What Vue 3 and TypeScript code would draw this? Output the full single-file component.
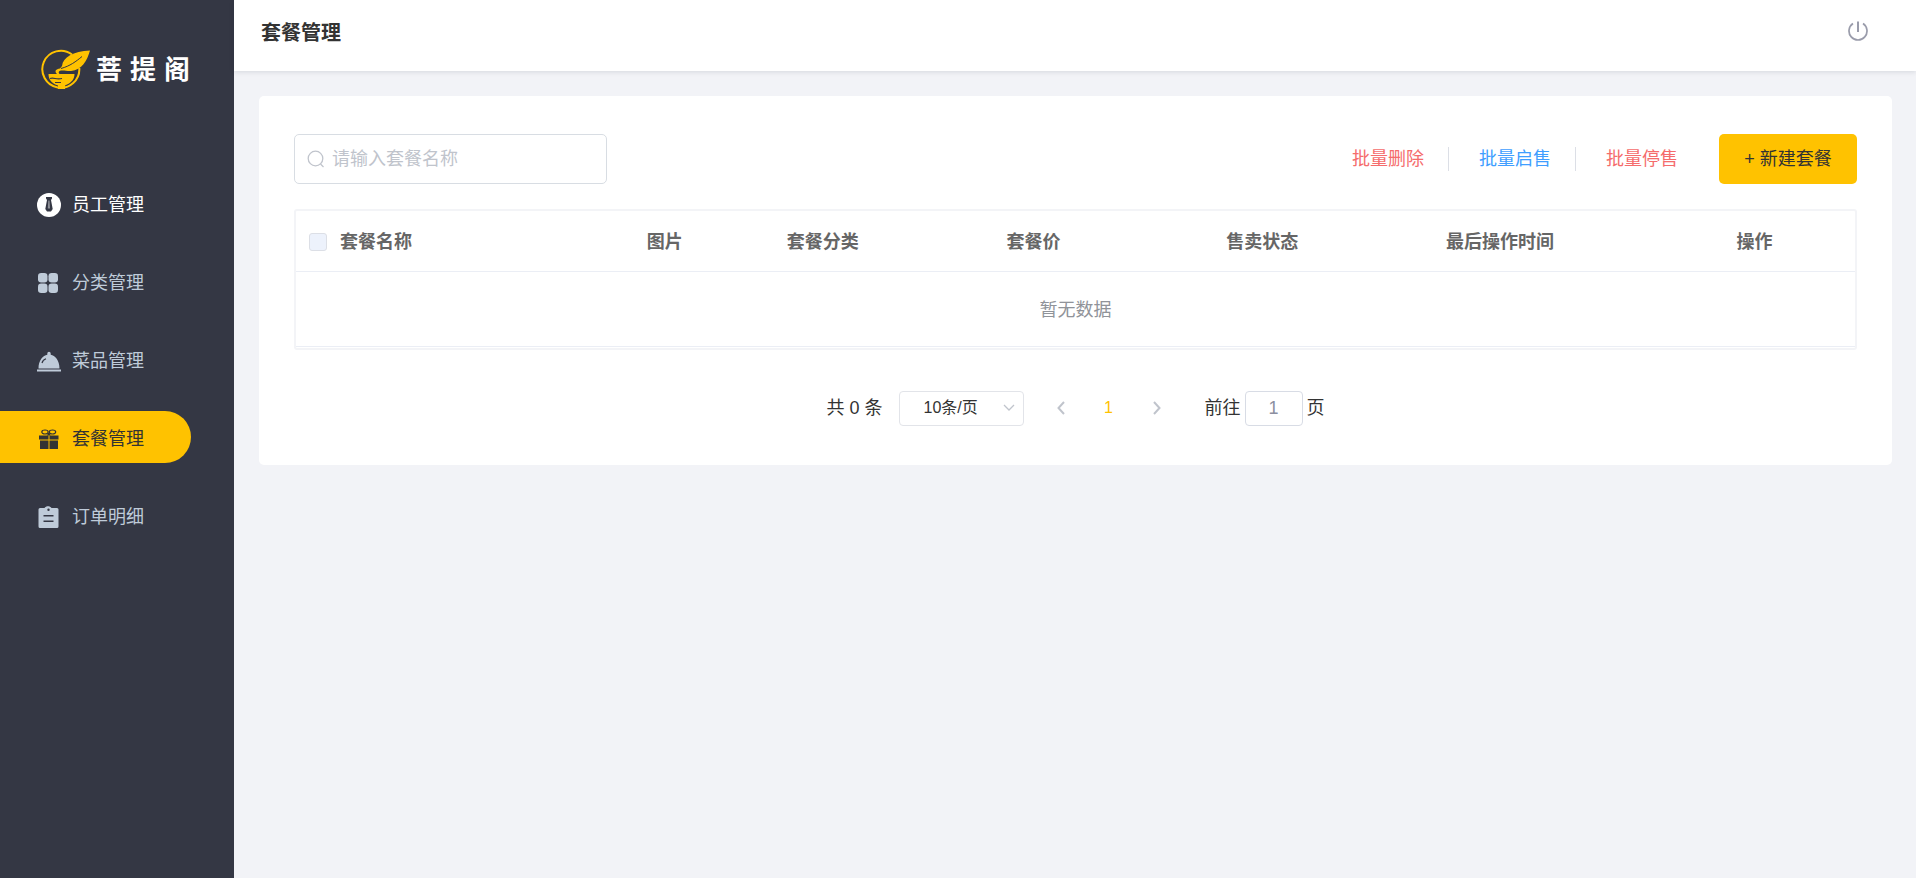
<script setup lang="ts">
import { ref } from 'vue'

interface MenuItem {
  id: string
  label: string
}

const brand: string[] = ['菩', '提', '阁']
const menu: MenuItem[] = [
  { id: 'member', label: '员工管理' },
  { id: 'category', label: '分类管理' },
  { id: 'food', label: '菜品管理' },
  { id: 'combo', label: '套餐管理' },
  { id: 'order', label: '订单明细' },
]
const active = ref('combo')
const hovered = ref('member')
const keyword = ref('')
const pageSize = ref('10')
const jumpPage = ref('1')
</script>

<template>
  <div class="app">
    <aside class="sidebar">
      <div class="logo">
        <svg class="logo-mark" viewBox="0 0 50 42" aria-hidden="true">
          <path d="M31 5.500A18.500 18.500 0 1 0 38.300 19" fill="none" stroke="#ffc200" stroke-width="2" />
          <path d="M21 17C22 8 32 2.500 49 1.500C46 12 41 21 30 22C26 22.300 23 21 20 21.500C17.500 22 17 23.500 18.500 25L16 25C13 22 15 20 19 19.500Z" fill="#ffc200" />
          <path d="M20 19.500C29 17 35 12.500 41 7.500" fill="none" stroke="#343744" stroke-width="1" />
          <path d="M7.500 25L33.500 25C33.500 30 30.500 33.500 26 35.500L24 36.500L24 40L17 40L17 36.500C11 34.500 7.500 31 7.500 25Z" fill="#ffc200" />
          <path d="M9 29.500C13 28 15 31 21 29.500M14 33.500L20 33.500" fill="none" stroke="#343744" stroke-width="1.100" />
        </svg>
        <span class="logo-text"><b v-for="char in brand" :key="char">{{ char }}</b></span>
      </div>
      <nav class="menu">
        <a
          v-for="item in menu"
          :key="item.id"
          href="#"
          class="menu-item"
          :class="{ active: item.id === active, hovered: item.id === hovered }"
          @click.prevent="active = item.id"
        >
          <svg class="menu-icon" viewBox="0 0 24 24" fill="currentColor" aria-hidden="true">
            <template v-if="item.id === 'member'">
              <circle cx="12" cy="12" r="12" />
              <path d="M9 4h6v1.500l-1 1.500 1.700 9L14 18.500h-4L8.300 16 10 7 9 5.500z" fill="#343744" />
              <path d="M11.300 7.500h1.200l.5 8h-2.200z" opacity=".45" />
            </template>
            <template v-else-if="item.id === 'category'">
              <rect x="1" y="2" width="9.500" height="9.500" rx="3.200" />
              <rect x="11.500" y="2" width="9.500" height="9.500" rx="3.200" />
              <rect x="1" y="12.500" width="9.500" height="9.500" rx="3.200" />
              <rect x="11.500" y="12.500" width="9.500" height="9.500" rx="3.200" />
            </template>
            <template v-else-if="item.id === 'food'">
              <path d="M1.500 19.500C1.500 11 6 6.500 10.300 5.700V4.500a1.700 1.700 0 0 1 3.400 0v1.200C18 6.500 22.500 11 22.500 19.500z" />
              <rect x="0" y="20.500" width="24" height="2" />
              <path d="M5 14C5.500 12 7 10.500 9 9.800" fill="none" stroke="#343744" stroke-width="1.200" />
            </template>
            <template v-else-if="item.id === 'combo'">
              <path d="M2 8.500h9.500v4H2zM12.500 8.500H21.500v4h-9zM3 13.500h8.500V22H3zM12.500 13.500H21V22h-8.500z" />
              <ellipse cx="8" cy="5" rx="3.200" ry="2" fill="none" stroke="currentColor" stroke-width="1.200" />
              <ellipse cx="15.500" cy="5" rx="3.200" ry="2" fill="none" stroke="currentColor" stroke-width="1.200" />
              <path d="M11 6h1.500l1 2.500h-3.500z" />
            </template>
            <path v-else fill-rule="evenodd" d="M3 3h4.500C9 .8 13 .8 14.500 3H20a1.500 1.500 0 0 1 1.500 1.500v17A1.500 1.500 0 0 1 20 23H3a1.500 1.500 0 0 1-1.500-1.500v-17A1.500 1.500 0 0 1 3 3zM11.500 3.500a1.200 1.200 0 1 0 0 2.400a1.200 1.200 0 1 0 0-2.400zM6.500 10v1.500h10V10zM6.500 15.500V17h10v-1.500z" />
          </svg>
          <span>{{ item.label }}</span>
        </a>
      </nav>
    </aside>

    <div class="main">
      <header class="topbar">
        <h1>套餐管理</h1>
        <button type="button" class="power" aria-label="退出">
          <svg viewBox="0 0 20 20" fill="none" stroke="#9a9cab" stroke-width="1.700" aria-hidden="true">
            <path d="M5 2.500a9 9 0 1 0 10 0" />
            <path d="M10 .5v10.500" stroke-width="2" />
          </svg>
        </button>
      </header>

      <main class="card">
        <div class="toolbar">
          <label class="search">
            <svg viewBox="0 0 18 18" fill="none" stroke="#c0c4cc" stroke-width="1.300" aria-hidden="true">
              <circle cx="8.500" cy="8.500" r="7.300" />
              <path d="M13.500 14L16.500 17" />
            </svg>
            <input v-model="keyword" type="text" placeholder="请输入套餐名称" aria-label="套餐名称" />
          </label>
          <div class="actions">
            <button type="button" class="link danger">批量删除</button>
            <button type="button" class="link info">批量启售</button>
            <button type="button" class="link danger">批量停售</button>
            <button type="button" class="create">+ 新建套餐</button>
          </div>
        </div>

        <div class="table-box">
          <table>
            <colgroup>
              <col class="c-check" />
              <col />
              <col class="c-data" />
              <col class="c-data" />
              <col class="c-data" />
              <col class="c-data" />
              <col class="c-data" />
              <col class="c-op" />
            </colgroup>
            <thead>
              <tr>
                <th class="check"><input type="checkbox" disabled aria-label="全选" /></th>
                <th>套餐名称</th>
                <th class="center">图片</th>
                <th>套餐分类</th>
                <th>套餐价</th>
                <th>售卖状态</th>
                <th>最后操作时间</th>
                <th class="center">操作</th>
              </tr>
            </thead>
            <tbody>
              <tr>
                <td colspan="8">暂无数据</td>
              </tr>
            </tbody>
          </table>
        </div>

        <div class="pager">
          <span>共 0 条</span>
          <span class="size">
            <select v-model="pageSize" aria-label="每页条数">
              <option value="10">10条/页</option>
              <option value="20">20条/页</option>
            </select>
            <svg viewBox="0 0 12 8" fill="none" stroke="#c0c4cc" stroke-width="1.300" aria-hidden="true"><path d="M1 1l5 5 5-5" /></svg>
          </span>
          <span class="pages">
            <button type="button" disabled aria-label="上一页">
              <svg viewBox="0 0 8 14" fill="none" stroke="#c0c4cc" stroke-width="2" aria-hidden="true"><path d="M7 1L1.500 7L7 13" /></svg>
            </button>
            <button type="button" class="current">1</button>
            <button type="button" disabled aria-label="下一页">
              <svg viewBox="0 0 8 14" fill="none" stroke="#c0c4cc" stroke-width="2" aria-hidden="true"><path d="M1 1L6.500 7L1 13" /></svg>
            </button>
          </span>
          <label class="jump">前往<input v-model="jumpPage" type="text" />页</label>
        </div>
      </main>
    </div>
  </div>
</template>

<style>
body {
  margin: 0;
  background: #f2f3f7;
}
</style>

<style scoped>
.app {
  display: flex;
  min-height: 100vh;
  font-family: "Liberation Sans", "Noto Sans CJK SC", sans-serif;
  font-size: 18px;
  line-height: 24px;
  color: #333;
}
.app * {
  box-sizing: border-box;
}
button,
input,
select {
  font: inherit;
  color: inherit;
  margin: 0;
}
button {
  border: 0;
  background: none;
  padding: 0;
  cursor: pointer;
}
svg {
  display: block;
  flex: none;
}
.sidebar {
  flex: none;
  width: 234px;
  background: #343744;
}
.logo {
  display: flex;
  align-items: center;
  gap: 5px;
  height: 139px;
  padding-left: 41px;
}
.logo-mark {
  width: 50px;
  height: 42px;
}
.logo-text {
  display: flex;
  gap: 8px;
  color: #fff;
  font-size: 26px;
}
.menu {
  display: flex;
  flex-direction: column;
  gap: 26px;
  margin-top: 38px;
}
.menu-item {
  display: flex;
  align-items: center;
  gap: 11px;
  width: 191px;
  height: 52px;
  padding: 4px 0 0 37px;
  border-radius: 0 26px 26px 0;
  color: #bfcbd9;
  text-decoration: none;
}
.menu-item.hovered {
  color: #fff;
}
.menu-item.active {
  background: #ffc200;
  color: #333;
}
.menu-icon {
  width: 24px;
  height: 24px;
}
.main {
  flex: 1;
  min-width: 0;
}
.topbar {
  display: flex;
  justify-content: space-between;
  height: 71px;
  padding: 21px 48px 0 27px;
  background: #fff;
  box-shadow: 0 1px 5px rgba(0, 21, 41, 0.12);
}
h1 {
  margin: 0;
  font-size: 20px;
  line-height: 24px;
}
.power {
  width: 20px;
  height: 20px;
}
.card {
  margin: 25px 24px 0 25px;
  padding: 38px 35px 39px;
  background: #fff;
  border-radius: 5px;
}
.toolbar {
  display: flex;
  justify-content: space-between;
  margin-bottom: 25px;
}
.search {
  display: flex;
  align-items: center;
  gap: 7px;
  width: 313px;
  height: 50px;
  padding: 0 12px;
  border: 1px solid #d8dde3;
  border-radius: 5px;
}
.search svg {
  width: 18px;
  height: 18px;
}
.search input {
  flex: 1;
  min-width: 0;
  border: 0;
  padding: 0;
  outline: 0;
  background: none;
}
.search input::placeholder {
  color: #c0c4cc;
  opacity: 1;
}
.actions {
  display: flex;
  align-items: center;
}
.link {
  height: 24px;
}
.link + .link {
  margin-left: 24px;
  padding-left: 30px;
  border-left: 1px solid #dcdfe6;
}
.danger {
  color: #f56c6c;
}
.info {
  color: #409eff;
}
.create {
  width: 138px;
  height: 50px;
  margin-left: 41px;
  border-radius: 5px;
  background: #ffc200;
}
.table-box {
  border: 2px solid #f3f4f7;
  border-radius: 3px;
  padding-bottom: 1px;
}
table {
  width: 100%;
  table-layout: fixed;
  border-collapse: collapse;
}
.c-check {
  width: 32px;
}
.c-data {
  width: 14.1%;
}
.c-op {
  width: 12.9%;
}
th {
  height: 60px;
  padding: 2px 12px 0;
  text-align: left;
  color: #666;
  border-bottom: 1px solid #ebeef5;
}
th.center {
  text-align: center;
}
th.check {
  padding: 2px 0 0 13px;
}
.check input {
  display: block;
  appearance: none;
  width: 18px;
  height: 18px;
  border: 1px solid #dcdfe6;
  border-radius: 3px;
  background: #edf2fc;
}
td {
  height: 75px;
  padding: 2px 0 0;
  text-align: center;
  color: #909399;
  border-bottom: 1px solid #ebeef5;
}
.pager {
  display: flex;
  align-items: center;
  justify-content: center;
  margin-top: 41px;
}
.size {
  display: grid;
  align-items: center;
  width: 125px;
  margin-left: 16px;
  font-size: 16px;
}
.size select {
  grid-area: 1 / 1;
  appearance: none;
  width: 100%;
  height: 35px;
  padding: 0 24px;
  border: 1px solid #e2e4e9;
  border-radius: 4px;
  background: none;
}
.size svg {
  grid-area: 1 / 1;
  justify-self: end;
  width: 12px;
  height: 8px;
  margin-right: 9px;
}
.pages {
  display: flex;
  align-items: center;
  margin: 0 24px 0 13px;
}
.pages button {
  display: flex;
  align-items: center;
  justify-content: center;
  width: 48px;
  height: 35px;
  font-size: 16px;
}
.pages svg {
  width: 8px;
  height: 14px;
}
.current {
  color: #ffc200;
}
.jump input {
  width: 58px;
  height: 35px;
  margin: 0 4px;
  padding: 0;
  text-align: center;
  color: #8c8fa0;
  border: 1px solid #d8dce5;
  border-radius: 4px;
}
</style>
